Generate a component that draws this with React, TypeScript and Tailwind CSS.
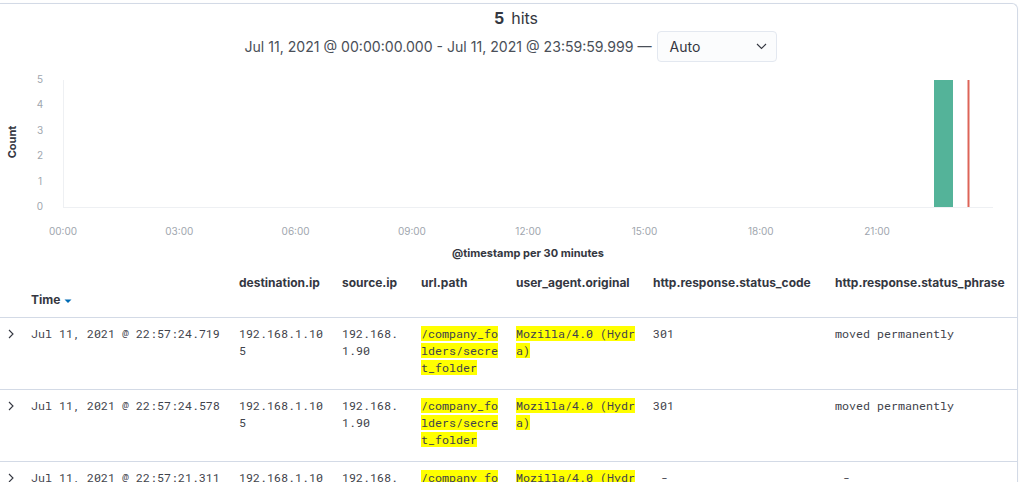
import React from "react";

type Row = {
  time: string;
  dest: string;
  source: string;
  path: string;
  agent: string;
  code: string;
  phrase: string;
};

const rows: Row[] = [
  {
    time: "Jul 11, 2021 @ 22:57:24.719",
    dest: "192.168.1.105",
    source: "192.168.1.90",
    path: "/company_folders/secret_folder",
    agent: "Mozilla/4.0 (Hydra)",
    code: "301",
    phrase: "moved permanently",
  },
  {
    time: "Jul 11, 2021 @ 22:57:24.578",
    dest: "192.168.1.105",
    source: "192.168.1.90",
    path: "/company_folders/secret_folder",
    agent: "Mozilla/4.0 (Hydra)",
    code: "301",
    phrase: "moved permanently",
  },
  {
    time: "Jul 11, 2021 @ 22:57:21.311",
    dest: "192.168.1.105",
    source: "192.168.1.90",
    path: "/company_folders/secret_folder",
    agent: "Mozilla/4.0 (Hydra)",
    code: "-",
    phrase: "-",
  },
];

const xTicks = ["00:00", "03:00", "06:00", "09:00", "12:00", "15:00", "18:00", "21:00"];
const yTicks = [
  { v: "5", y: 10 },
  { v: "4", y: 35 },
  { v: "3", y: 61 },
  { v: "2", y: 86 },
  { v: "1", y: 112 },
  { v: "0", y: 137 },
];

const grid = "grid grid-cols-[31px_208px_103px_79px_95px_137px_182px_1fr]";

function Chart() {
  return (
    <svg width="1017" height="192" className="block" style={{ fontFamily: "Inter, sans-serif" }}>
      <line x1="63.5" y1="10" x2="63.5" y2="137" stroke="#eef0f3" />
      <line x1="63" y1="137.5" x2="993" y2="137.5" stroke="#eef0f3" />
      {yTicks.map((t) => (
        <text key={t.v} x="40" y={t.y} fontSize="10" fill="#a0a6ae" textAnchor="middle" dominantBaseline="middle">
          {t.v}
        </text>
      ))}
      <text
        x="13"
        y="72"
        fontSize="11"
        fontWeight="700"
        fill="#343741"
        textAnchor="middle"
        dominantBaseline="middle"
        transform="rotate(-90 13 72)"
      >
        Count
      </text>
      {xTicks.map((t, i) => (
        <text key={t} x={63 + i * 116.3} y="162" fontSize="10" fill="#a0a6ae" textAnchor="middle" dominantBaseline="middle">
          {t}
        </text>
      ))}
      <rect x="934" y="10" width="19" height="127" fill="#54b399" />
      <line x1="968.5" y1="10" x2="968.5" y2="137" stroke="#dd6458" strokeWidth="2" />
      <text x="528" y="184" fontSize="11" fontWeight="700" fill="#343741" textAnchor="middle" dominantBaseline="middle">
        @timestamp per 30 minutes
      </text>
    </svg>
  );
}

function Mark({ children }: { children: React.ReactNode }) {
  return <span className="bg-[#ffff00]">{children}</span>;
}

export default function App() {
  const mono = "font-['Roboto_Mono','DejaVu_Sans_Mono',monospace] text-[11.67px] leading-[17px] text-[#3f434c] break-all";
  return (
    <div className="w-[1025px] h-[482px] overflow-hidden bg-white font-['Inter',sans-serif] text-[#343741]">
      <div className="mt-[3px] w-[1018px] border border-l-0 border-b-0 border-[#d3dae6] rounded-tr-[6px] shadow-[0_1px_3px_rgba(0,0,0,0.04)]">
        {/* hits header */}
        <div className="pt-[4px] pl-[15px] flex justify-center text-[16px] leading-5">
          <span className="font-bold">5</span>
          <span className="ml-[7px]">hits</span>
        </div>
        <div className="mt-[3px] pl-[4px] flex justify-center items-center h-[31px]">
          <span className="text-[14.1px] text-[#4a4f58]">
            Jul 11, 2021 @ 00:00:00.000 - Jul 11, 2021 @ 23:59:59.999 —
          </span>
          <div className="ml-[5px] w-[120px] h-[31px] border border-[#e3e8f0] bg-[#fbfcfd] rounded-[4px] flex items-center justify-between pl-[12px] pr-[9px]">
            <span className="text-[14px]">Auto</span>
            <svg width="11" height="7" viewBox="0 0 11 7">
              <path d="M1 1 L5.5 5.5 L10 1" fill="none" stroke="#343741" strokeWidth="1.1" />
            </svg>
          </div>
        </div>

        <div className="mt-[8px]">
          <Chart />
        </div>

        {/* table header */}
        <div className={`${grid} h-[56px] border-b border-[#d3dae6] text-[12px] leading-4 font-bold`}>
          <div />
          <div className="pt-[30px] flex items-start">
            <span>Time</span>
            <svg width="8" height="5" viewBox="0 0 8 5" className="ml-[4px] mt-[7px]">
              <path d="M0.5 0.5 L7.5 0.5 L4 4 Z" fill="#006bb4" />
            </svg>
          </div>
          <div className="pt-[13px]">destination.ip</div>
          <div className="pt-[13px]">source.ip</div>
          <div className="pt-[13px]">url.path</div>
          <div className="pt-[13px]">user_agent.original</div>
          <div className="pt-[13px]">http.response.status_code</div>
          <div className="pt-[13px]">http.response.status_phrase</div>
        </div>

        {rows.map((r, i) => (
          <div key={i} className={`${grid} h-[72px] border-b border-[#d3dae6] pt-[7px]`}>
            <div className="pl-[8px] pt-[4px]">
              <svg width="6" height="10" viewBox="0 0 6 10">
                <path d="M1 1 L5 5 L1 9" fill="none" stroke="#343741" strokeWidth="1.1" />
              </svg>
            </div>
            <div className={mono}>{r.time}</div>
            <div className={`${mono} w-[88px]`}>{r.dest}</div>
            <div className={`${mono} w-[60px]`}>{r.source}</div>
            <div className={`${mono} w-[80px]`}>
              <Mark>{r.path}</Mark>
            </div>
            <div className={`${mono} w-[122px]`}>
              <Mark>{r.agent}</Mark>
            </div>
            <div className={`${mono} ${r.code === "-" ? "pl-[8px]" : ""}`}>{r.code}</div>
            <div className={`${mono} ${r.phrase === "-" ? "pl-[8px]" : ""}`}>{r.phrase}</div>
          </div>
        ))}
      </div>
    </div>
  );
}
